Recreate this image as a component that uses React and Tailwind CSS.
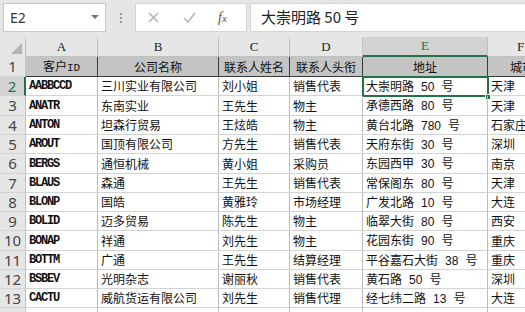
import React from "react";

const colW = [72, 121, 71, 73, 125, 66];
const colLetters = ["A", "B", "C", "D", "E", "F"];
const header = ["客户ID", "公司名称", "联系人姓名", "联系人头衔", "地址", "城市"];
const rows = [
  ["AABBCCD", "三川实业有限公司", "刘小姐", "销售代表", ["大崇明路", "50", "号"], "天津"],
  ["ANATR", "东南实业", "王先生", "物主", ["承德西路", "80", "号"], "天津"],
  ["ANTON", "坦森行贸易", "王炫皓", "物主", ["黄台北路", "780", "号"], "石家庄"],
  ["AROUT", "国顶有限公司", "方先生", "销售代表", ["天府东街", "30", "号"], "深圳"],
  ["BERGS", "通恒机械", "黄小姐", "采购员", ["东园西甲", "30", "号"], "南京"],
  ["BLAUS", "森通", "王先生", "销售代表", ["常保阁东", "80", "号"], "天津"],
  ["BLONP", "国皓", "黄雅玲", "市场经理", ["广发北路", "10", "号"], "大连"],
  ["BOLID", "迈多贸易", "陈先生", "物主", ["临翠大街", "80", "号"], "西安"],
  ["BONAP", "祥通", "刘先生", "物主", ["花园东街", "90", "号"], "重庆"],
  ["BOTTM", "广通", "王先生", "结算经理", ["平谷嘉石大街", "38", "号"], "重庆"],
  ["BSBEV", "光明杂志", "谢丽秋", "销售代表", ["黄石路", "50", "号"], "深圳"],
  ["CACTU", "威航货运有限公司", "刘先生", "销售代理", ["经七纬二路", "13", "号"], "大连"],
];
const rowH = [19, 20, 19, 19, 20, 19, 19, 19, 20, 19, 19, 19];

const cjk = { fontFamily: '"Noto Sans CJK SC", "Noto Sans", sans-serif' };

function NameBox() {
  return (
    <div className="ml-[3px] w-[103px] h-[29px] bg-white border border-[#c6c6c6] flex items-center justify-between pl-[6px] pr-[6px]">
      <span className="text-[14px] text-[#333]" style={{ fontFamily: '"Noto Sans", sans-serif' }}>E2</span>
      <svg width="8" height="5" viewBox="0 0 8 5"><path d="M0 0 L8 0 L4 4 Z" fill="#777" /></svg>
    </div>
  );
}

function FormulaBar() {
  return (
    <div className="h-[37px] bg-[#e6e6e6] flex items-start pt-[3px]">
      <NameBox />
      <div className="w-[29px] h-[29px] flex flex-col items-center justify-center gap-[2px]">
        <span className="w-[2px] h-[2px] bg-[#9a9a9a]" />
        <span className="w-[2px] h-[2px] bg-[#9a9a9a]" />
        <span className="w-[2px] h-[2px] bg-[#9a9a9a]" />
      </div>
      <div className="w-[112px] h-[29px] bg-white border border-[#d4d4d4] flex items-center">
        <svg className="ml-[12px]" width="11" height="11" viewBox="0 0 11 11">
          <path d="M1 1 L10 10 M10 1 L1 10" stroke="#b5b5b5" strokeWidth="1.6" />
        </svg>
        <svg className="ml-[24px]" width="13" height="11" viewBox="0 0 13 11">
          <path d="M1 6 L5 10 L12 1" stroke="#b5b5b5" strokeWidth="1.6" fill="none" />
        </svg>
        <span className="ml-[22px] text-[14px] italic text-[#555]" style={{ fontFamily: '"Liberation Serif", serif' }}>
          f<span className="text-[11px]">x</span>
        </span>
      </div>
      <div className="ml-[3px] flex-1 h-[29px] bg-white border border-[#d4d4d4] border-r-0 flex items-center pl-[10px]">
        <span className="text-[15px] text-[#222]" style={{ fontFamily: '"Noto Sans CJK SC", "Noto Sans", sans-serif' }}>
          大崇明路 50 号
        </span>
      </div>
    </div>
  );
}

function ColHeader() {
  return (
    <div className="flex h-[20px] bg-[#e6e6e6]">
      <div className="w-[26px] shrink-0 relative border-r border-[#c0c0c0]">
        <svg className="absolute right-[3px] bottom-[3px]" width="11" height="11" viewBox="0 0 11 11">
          <path d="M11 0 L11 11 L0 11 Z" fill="#b4b4b4" />
        </svg>
      </div>
      {colLetters.map((l, i) => {
        const sel = l === "E";
        return (
          <div
            key={l}
            style={{ width: colW[i] }}
            className={
              "shrink-0 flex items-center justify-center text-[13px] border-r " +
              (sel
                ? "bg-[#d2d2d2] text-[#217346] border-b-2 border-b-[#217346] border-r-[#c0c0c0]"
                : "text-[#222] border-r-[#c0c0c0] border-b border-b-[#c0c0c0]")
            }
          >
            <span style={{ fontFamily: '"Liberation Serif", serif' }}>{l}</span>
          </div>
        );
      })}
    </div>
  );
}

function RowNum({ n, h, sel }) {
  return (
    <div
      style={{ height: h }}
      className={
        "w-[26px] shrink-0 flex items-center justify-center text-[15px] border-b border-[#d4d4d4] " +
        (sel ? "bg-[#d2d2d2] text-[#217346] border-r-2 border-r-[#217346]" : "bg-[#e6e6e6] text-[#444] border-r border-r-[#c0c0c0]")
      }
    >
      {n ? <span style={{ fontFamily: '"Noto Sans", sans-serif' }} className="leading-none">{n}</span> : null}
    </div>
  );
}

function Row1() {
  return (
    <div className="flex h-[20px]">
      <RowNum n={1} h={20} />
      {header.map((t, i) => (
        <div
          key={i}
          style={{ width: colW[i], ...cjk }}
          className={
            "shrink-0 bg-[#c4c4c4] border-r border-b border-[#3a3a3a] flex items-center text-[12px] text-[#111] whitespace-nowrap overflow-hidden " +
            (i === 5 ? "justify-start pl-[22px]" : "justify-center")
          }
        >
          {i === 0 ? (
            <span>
              客户<span style={{ fontFamily: '"Liberation Mono", monospace' }} className="text-[11px]">ID</span>
            </span>
          ) : (
            t
          )}
        </div>
      ))}
    </div>
  );
}

function DataRow({ r, idx, h }) {
  const n = idx + 2;
  return (
    <div className="flex relative" style={{ height: h }}>
      <RowNum n={n} h={h} sel={n === 2} />
      {r.map((v, i) => {
        let content;
        if (i === 0) {
          content = (
            <span style={{ fontFamily: '"Liberation Mono", monospace' }} className="text-[12px] font-bold text-[#111] tracking-[-1.2px]">
              {v}
            </span>
          );
        } else if (i === 4) {
          content = (
            <span style={cjk} className="text-[12px] text-[#111] whitespace-nowrap">
              {v[0]}
              <span className="ml-[7px] mr-[7px]" style={{ fontFamily: '"Liberation Sans", sans-serif' }}>{v[1]}</span>
              {v[2]}
            </span>
          );
        } else {
          content = (
            <span style={cjk} className="text-[12px] text-[#111] whitespace-nowrap">
              {v}
            </span>
          );
        }
        return (
          <div
            key={i}
            style={{ width: colW[i] }}
            className="shrink-0 flex items-center pl-[3px] border-r border-r-[#bdbdbd] border-b border-b-[#d4d4d4] overflow-hidden"
          >
            {content}
          </div>
        );
      })}
      {n === 2 && (
        <>
          <div className="absolute left-[362px] top-[-1px] w-[127px] h-[21px] border-2 border-[#217346] pointer-events-none" />
          <div className="absolute left-[485px] top-[17px] w-[6px] h-[6px] bg-[#217346] border border-white" />
        </>
      )}
    </div>
  );
}

export default function App() {
  return (
    <div className="w-[525px] h-[312px] overflow-hidden bg-white">
      <FormulaBar />
      <ColHeader />
      <Row1 />
      {rows.map((r, i) => (
        <DataRow key={i} r={r} idx={i} h={rowH[i]} />
      ))}
      <div className="flex h-[20px]">
        <RowNum n={null} h={20} />
        {colW.map((w, i) => (
          <div key={i} style={{ width: w }} className="shrink-0 border-r border-r-[#bdbdbd]" />
        ))}
      </div>
    </div>
  );
}
